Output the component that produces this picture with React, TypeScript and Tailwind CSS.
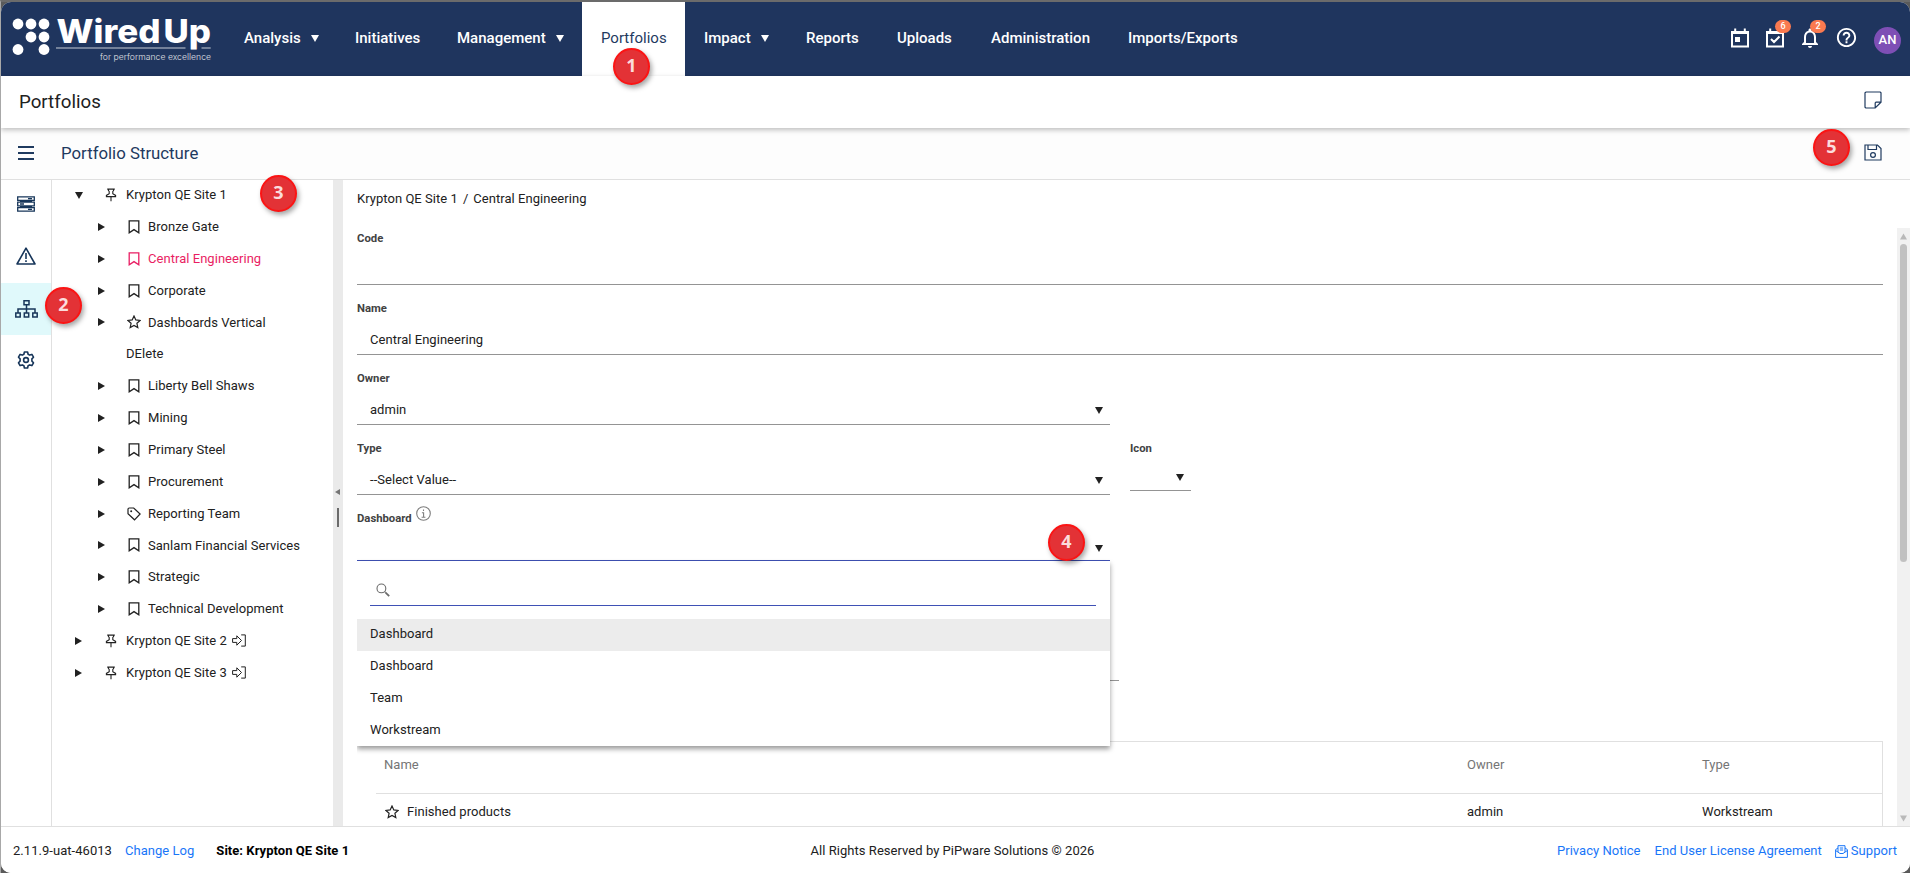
import React from "react";
import { MdNotificationsNone, MdHelpOutline } from "react-icons/md";

type Svg = { className?: string; children?: React.ReactNode; box?: string; sw?: number };
const Line = ({ className = "", children, box = "0 0 16 16", sw = 1.3 }: Svg) => (
  <svg viewBox={box} className={className} fill="none" stroke="currentColor" strokeWidth={sw}>
    {children}
  </svg>
);

const Caret = ({ className = "" }: { className?: string }) => (
  <svg viewBox="0 0 8 7" className={`h-[7px] w-2 shrink-0 fill-current ${className}`}>
    <path d="M0 0h8L4 7z" />
  </svg>
);
const CaretRight = () => (
  <svg viewBox="0 0 7 8" className="h-2 w-[7px] fill-current">
    <path d="M0 0l7 4-7 4z" />
  </svg>
);

const Bookmark = () => (
  <Line className="h-[14px] w-[14px]" box="0 0 14 14">
    <path d="M2.2.9h9.6v11.9L7 9.6l-4.8 3.2z" />
  </Line>
);
const Star = () => (
  <Line className="h-[14px] w-[14px]" box="0 0 14 14" sw={1.2}>
    <path d="M7 1l1.8 3.9 4.3.5-3.2 2.9.9 4.3L7 10.4l-3.8 2.2.9-4.3L.9 5.4l4.3-.5z" />
  </Line>
);
const Tag = () => (
  <Line className="h-[14px] w-[14px]" box="0 0 14 14" sw={1.2}>
    <path d="M1 2.3Q1 1 2.3 1h4.4l6.4 6-5.6 5.8L1 6.8z" />
    <circle cx="4.2" cy="4.2" r="1" fill="currentColor" stroke="none" />
  </Line>
);
const Pin = () => (
  <Line className="h-[14px] w-[14px]" box="0 0 14 14" sw={1.1}>
    <path d="M3.2 1.1h7.6M4.4 1.2v1.4l.8.8v2.4L2.4 7.4v1.2h9.2V7.4L8.8 5.8V3.4l.8-.8V1.2M7 8.6v4.6" />
  </Line>
);
const Enter = () => (
  <Line className="ml-[5px] h-[13px] w-[14px]" box="0 0 14 13" sw={1}>
    <path d="M.6 4.6h4.2V1.8l4.7 4.7-4.7 4.7V8.4H.6zM9.2.9h4.1v11.200H9.200" />
  </Line>
);

type Node = { label: string; icon?: "pin" | "bm" | "star" | "tag"; level: number; open?: boolean; sel?: boolean; link?: boolean };
const tree: Node[] = [
  { label: "Krypton QE Site 1", icon: "pin", level: 0, open: true },
  { label: "Bronze Gate", icon: "bm", level: 1 },
  { label: "Central Engineering", icon: "bm", level: 1, sel: true },
  { label: "Corporate", icon: "bm", level: 1 },
  { label: "Dashboards Vertical", icon: "star", level: 1 },
  { label: "DElete", level: 1 },
  { label: "Liberty Bell Shaws", icon: "bm", level: 1 },
  { label: "Mining", icon: "bm", level: 1 },
  { label: "Primary Steel", icon: "bm", level: 1 },
  { label: "Procurement", icon: "bm", level: 1 },
  { label: "Reporting Team", icon: "tag", level: 1 },
  { label: "Sanlam Financial Services", icon: "bm", level: 1 },
  { label: "Strategic", icon: "bm", level: 1 },
  { label: "Technical Development", icon: "bm", level: 1 },
  { label: "Krypton QE Site 2", icon: "pin", level: 0, link: true },
  { label: "Krypton QE Site 3", icon: "pin", level: 0, link: true },
];

const TreeRow = ({ n }: { n: Node }) => (
  <div className={`flex h-[31.87px] items-center pb-[2px] ${n.level ? "pl-[46px]" : "pl-[23px]"}`}>
    <span className="flex w-7 shrink-0">
      {n.icon && (n.open ? <Caret className="mt-px" /> : <CaretRight />)}
    </span>
    <span className={`flex items-center ${n.sel ? "text-[#e91e63]" : ""}`}>
      {n.icon && (
        <span className={`flex w-[15px] justify-center ${n.level ? "mr-[7px]" : "mr-2"}`}>
          {n.icon === "pin" && <Pin />}
          {n.icon === "bm" && <Bookmark />}
          {n.icon === "star" && <Star />}
          {n.icon === "tag" && <Tag />}
        </span>
      )}
      <span>{n.label}</span>
      {n.link && <Enter />}
    </span>
  </div>
);

const nav = [
  { t: "Analysis", w: "w-[111px]", c: true },
  { t: "Initiatives", w: "w-[102px]" },
  { t: "Management", w: "w-[144px]", c: true },
  { t: "Portfolios", w: "w-[103px]", a: true },
  { t: "Impact", w: "w-[102px]", c: true },
  { t: "Reports", w: "w-[91px]" },
  { t: "Uploads", w: "w-[94px]" },
  { t: "Administration", w: "w-[137px]" },
  { t: "Imports/Exports", w: "w-[150px]" },
];

const Marker = ({ n, pos }: { n: number; pos: string }) => (
  <div
    className={`absolute z-30 flex h-[37px] w-[37px] items-center justify-center rounded-full border-2 border-[#fb1414] bg-[#e33236] pb-0.5 font-['Open_Sans',sans-serif] text-[18px] font-bold text-[#fbdcdc] shadow-[2px_3px_5px_rgba(0,0,0,0.35)] ${pos}`}
  >
    {n}
  </div>
);

const dots = [[17, 22], [30, 22], [43, 22], [30, 35], [43, 35], [17, 47.5], [43, 47.5]];

const Logo = () => (
  <svg viewBox="0 0 223 74" className="h-[74px] w-[223px] shrink-0 fill-white">
    {dots.map(([x, y]) => (
      <circle key={`${x}-${y}`} cx={x} cy={y} r="5.4" />
    ))}
    <text x="55.5" y="41" fontSize="32.5" fontWeight="800" fontFamily="Inter, sans-serif" textLength="104" lengthAdjust="spacingAndGlyphs">Wired</text>
    <text x="162.5" y="41" fontSize="32.5" fontWeight="800" fontFamily="Inter, sans-serif" textLength="47.5" lengthAdjust="spacingAndGlyphs">Up</text>
    <path d="M55 45.6h129.5v1H55zM200.5 45.6h9.2v1h-9.2z" opacity=".75" />
    <text x="99" y="58" fontSize="8.6" fontFamily="Inter, sans-serif" fontWeight="300" textLength="111" opacity=".85">for performance excellence</text>
  </svg>
);

const Label = ({ children }: { children: React.ReactNode }) => (
  <span className="text-[11.3px] leading-4 font-bold tracking-normal text-[#424242]">{children}</span>
);

const Field = ({ label, value, caret }: { label: string; value?: string; caret?: boolean }) => (
  <div className="flex h-[70px] flex-col border-b border-[#949494]">
    <div className="mt-4 flex h-4"><Label>{label}</Label></div>
    <div className="flex flex-1 items-center justify-between pr-[7px] pl-[13px] pt-[8px]">
      <span>{value}</span>
      {caret && <Caret className="mt-px" />}
    </div>
  </div>
);

const Badge = ({ n, pos }: { n: number; pos: string }) => (
  <span className={`absolute -top-[8px] flex h-[13px] w-4 items-center justify-center rounded-full bg-[#fa7a50] text-[9px] leading-none ${pos}`}>{n}</span>
);

export default function App() {
  return (
    <div className="relative h-[873px] w-[1910px] overflow-hidden border-t-2 border-l border-t-[#6b6b6b] border-l-[#a8a8a8] bg-[#5a5a5a] font-[Roboto,sans-serif] text-[13px] tracking-[0.04px] text-[#212121]">
      <div className="flex h-full w-full flex-col overflow-hidden rounded-[10px] bg-white">
        <header className="flex h-[74px] shrink-0 bg-[#1f355e] text-[15px] font-medium tracking-normal text-white">
          <Logo />
          <nav className="ml-px flex">
            {nav.map((i) => (
              <div key={i.t} className={`flex h-full items-center pb-[2px] pl-[19px] ${i.w} ${i.a ? "bg-white font-normal text-[#1f3a5f]" : ""}`}>
                {i.t}
                {i.c && <Caret className="ml-[10px]" />}
              </div>
            ))}
          </nav>
          <div className="ml-auto flex items-center pr-[9px] pb-[3px]">
            <Line className="mr-[17px] h-5 w-[18px]" box="0 0 18 20" sw={2}>
              <path d="M1 4h16v14.5H1zM1 5h16M4.2.5v4M13.8.5v4" />
              <path d="M4 9h5v5H4z" fill="currentColor" stroke="none" />
            </Line>
            <span className="relative mr-[14px] flex">
              <Line className="h-5 w-[18px]" box="0 0 18 20" sw={2}>
                <path d="M1 4h16v14.5H1zM1 5h16M4.2.5v4M13.8.5v4M5 11l3 3 5.5-5.5" />
              </Line>
              <Badge n={6} pos="left-[9px]" />
            </span>
            <span className="relative mr-[13px] flex">
              <MdNotificationsNone className="-my-[2px] h-6 w-6" />
              <Badge n={2} pos="left-[12px]" />
            </span>
            <MdHelpOutline className="mr-[16px] h-[23px] w-[23px]" />
            <span className="mt-[5px] flex h-[27px] w-[27px] items-center justify-center rounded-full bg-[#7e4fb5] text-[13px]">AN</span>
          </div>
        </header>

        <div className="z-10 flex h-[52px] shrink-0 items-center justify-between bg-white pr-[28px] pl-[18px] text-[18.7px] tracking-normal shadow-[0_2px_5px_rgba(0,0,0,0.25)]">
          <span>Portfolios</span>
          <Line className="mb-1 h-[18px] w-[18px] text-[#1f3a5f]" box="0 0 18 18" sw={1.2}>
            <path d="M2 1h14.2l.8.8v9.4L11.2 17H1.800L1 16.200V1.800zM11.200 17v-5l.8-.8h5" />
          </Line>
        </div>

        <div className="flex h-[52px] shrink-0 items-center border-b border-[#e0e0e0] bg-[#fdfdfd] pr-[28px] pb-px pl-[17px] text-[16.8px] tracking-normal text-[#1f3a5f]">
          <Line className="mr-[27px] h-4 w-4" sw={1.8}>
            <path d="M0 2h16M0 8h16M0 14h16" />
          </Line>
          <span className="pt-[2px]">Portfolio Structure</span>
          <Line className="mb-px ml-auto h-[17px] w-[18px]" box="0 0 18 17" sw={1.2}>
            <path d="M1 1h12.5L17 4.5V16H1zM4 1v4.5h8.5V1" />
            <circle cx="9" cy="11" r="2.4" />
          </Line>
        </div>

        <div className="flex min-h-0 flex-1 bg-white">
          <div className="flex w-[51px] shrink-0 flex-col border-r border-[#e0e0e0] text-[#17365a]">
            <div className="flex h-[51px] items-center justify-center pb-[3px]">
              <Line className="h-4 w-[18px]" box="0 0 18 16" sw={1.3}>
                <path d="M.7.9h16.6v3.4H.7zM.7 6.2h16.6v3.6H.7zM.7 11.7h16.6v3.4H.7zM11 2.6h4M3 8h4M11 13.4h4M3 5.2h12M3 10.8h12" />
              </Line>
            </div>
            <div className="flex h-[52px] items-center justify-center pb-[2px]">
              <Line className="h-[18px] w-5" box="0 0 20 18" sw={1.6}>
                <path d="M10 1.2L19 17H1zM10 6v6M10 13.2v1.7" strokeLinejoin="round" />
              </Line>
            </div>
            <div className="flex h-[52px] items-center justify-center bg-[#e0f9fb] pb-px">
              <Line className="h-[18px] w-[23px]" box="0 0 23 18" sw={1.5}>
                <path d="M9 .8h5v4H9zM.8 13h4.4v4H.8zM9.3 13h4.4v4H9.3zM17.8 13h4.4v4h-4.4zM11.5 4.8V13M3 13V9h17v4" />
              </Line>
            </div>
            <div className="flex h-[52px] items-center justify-center pb-[2px]">
              <Line className="h-[18px] w-[18px]" box="0 0 18 18" sw={1.6}>
                <path d="M7.4 1h3.2l.5 2.2 1.6.9 2.2-.7 1.6 2.8-1.6 1.7v2.2l1.6 1.7-1.6 2.8-2.2-.7-1.6.9-.5 2.2H7.4l-.5-2.2-1.6-.9-2.2.7-1.6-2.8 1.6-1.7V7.900L1.500 6.200l1.600-2.800 2.200.7 1.600-.9z" strokeLinejoin="round" />
                <circle cx="9" cy="9" r="2.4" />
              </Line>
            </div>
          </div>

          <div className="w-[281px] shrink-0">
            {tree.map((n) => (
              <TreeRow key={n.label} n={n} />
            ))}
          </div>

          <div className="flex w-[10px] shrink-0 flex-col items-end bg-[#eaeaea] pt-[309px] text-[#757575]">
            <svg viewBox="0 0 5 6" className="mr-[3px] h-[6px] w-[5px] fill-current"><path d="M5 0v6L0 3z" /></svg>
            <div className="mt-[13px] mr-1 h-[19px] w-0.5 bg-[#6b6b6b]" />
          </div>

          <div className="flex min-w-0 flex-1 flex-col pl-[14px]">
            <div className="flex h-[35px] shrink-0 items-center pt-[2px]">
              <span>Krypton QE Site 1</span>
              <span className="mx-[5px]">/</span>
              <span>Central Engineering</span>
            </div>
            <div className="flex min-h-0 flex-1">
              <div className="mr-[14px] h-full w-[1526px] overflow-hidden">
                <Field label="Code" />
                <Field label="Name" value="Central Engineering" />
                <div className="w-[753px]">
                  <Field label="Owner" value="admin" caret />
                </div>
                <div className="flex gap-5">
                  <div className="w-[753px]">
                    <Field label="Type" value="--Select Value--" caret />
                  </div>
                  <div className="flex h-[66px] w-[61px] flex-col border-b border-[#949494]">
                    <div className="mt-4 flex h-4"><Label>Icon</Label></div>
                    <Caret className="mt-[17px] mr-[7px] self-end" />
                  </div>
                </div>
                <div className="relative flex h-[66px] w-[753px] flex-col border-b border-[#3f51b5]">
                  <div className="mt-[11px] flex h-5 items-start gap-1">
                    <span className="mt-[5px] flex"><Label>Dashboard</Label></span>
                    <Line className="h-[15px] w-[15px] text-[#7d7d7d]" box="0 0 15 15" sw={1.1}>
                      <circle cx="7.5" cy="7.5" r="6.8" />
                      <path d="M7.5 3.5v1.6M5.9 6.7h1.7v4.4M5.6 11.3h3.8" />
                    </Line>
                  </div>
                  <Caret className="mt-[19px] mr-[7px] self-end" />
                  <div className="absolute top-[66px] left-0 z-20 w-[753px] bg-white shadow-[0_3px_5px_rgba(0,0,0,0.4)]">
                    <div className="mr-[14px] ml-[13px] flex h-[45px] items-center border-b border-[#3f51b5] pt-[13px] pl-[6px]">
                      <Line className="h-[14px] w-[14px] text-[#6b6b6b]" box="0 0 14 14" sw={1.1}>
                        <circle cx="5.4" cy="5.4" r="4.4" />
                        <path d="M8.7 8.7l1 1" />
                        <path d="M9.6 9.6l3.6 3.6" strokeWidth="1.8" />
                      </Line>
                    </div>
                    <div className="pt-[13px]">
                      {["Dashboard", "Dashboard", "Team", "Workstream"].map((o, i) => (
                        <div key={i} className={`flex h-8 items-center pb-[2px] pl-[13px] last:h-[31px] ${i === 0 ? "bg-[#ececec]" : ""}`}>{o}</div>
                      ))}
                    </div>
                  </div>
                </div>
                <div className="h-[120px] w-[762px] border-b border-[#949494]" />
                <div className="mt-[60px] ml-[19px] border-t border-r border-[#e0e0e0]">
                  <div className="flex h-[52px] items-center border-b border-[#e0e0e0] pb-[5px] text-[#757575]">
                    <span className="w-[1083px] pl-2">Name</span>
                    <span className="ml-[8px] w-[235px]">Owner</span>
                    <span>Type</span>
                  </div>
                  <div className="flex h-[36px] items-center">
                    <span className="flex w-[1083px] items-center gap-2 pl-[9px]"><Star />Finished products</span>
                    <span className="ml-[8px] w-[235px]">admin</span>
                    <span>Workstream</span>
                  </div>
                </div>
              </div>
              <div className="mt-[13px] flex w-[13px] flex-col items-center bg-[#f1f1f1] pt-[5px] pb-1 text-[#b9b9b9]">
                <Caret className="h-[6px] w-[7px] rotate-180" />
                <div className="mt-1 h-[318px] w-[7px] rounded-full bg-[#c1c1c1]" />
                <Caret className="mt-auto h-[6px] w-[7px]" />
              </div>
            </div>
          </div>
        </div>

        <footer className="grid h-[47px] shrink-0 grid-cols-3 items-center border-t border-[#e0e0e0] bg-white pt-[2px] pr-[13px] pl-[12px]">
          <div className="flex">
            <span>2.11.9-uat-46013</span>
            <span className="ml-[13px] text-[#1976f8]">Change Log</span>
            <span className="ml-[22px] font-bold text-black">Site: Krypton QE Site 1</span>
          </div>
          <div className="pr-[5px] text-center">All Rights Reserved by PiPware Solutions © 2026</div>
          <div className="flex items-center justify-end text-[#1976f8]">
            <span>Privacy Notice</span>
            <span className="ml-[14px]">End User License Agreement</span>
            <Line className="mr-[3px] ml-[13px] h-[13px] w-[13px]" box="0 0 13 13" sw={1}>
              <path d="M.6 4.6L3 3M12.4 4.6L10 3M.6 4.6v7.8h11.8V4.6M.6 5.5l4.4 3h3l4.4-3M3 7V.7h7V7M4.8 3h3.4M4.8 5h3.4" />
            </Line>
            <span>Support</span>
          </div>
        </footer>
      </div>

      <Marker n={1} pos="left-[612px] top-[46px]" />
      <Marker n={2} pos="left-[44px] top-[285px]" />
      <Marker n={3} pos="left-[259px] top-[173px]" />
      <Marker n={4} pos="left-[1047px] top-[522px]" />
      <Marker n={5} pos="left-[1812px] top-[127px]" />
    </div>
  );
}
